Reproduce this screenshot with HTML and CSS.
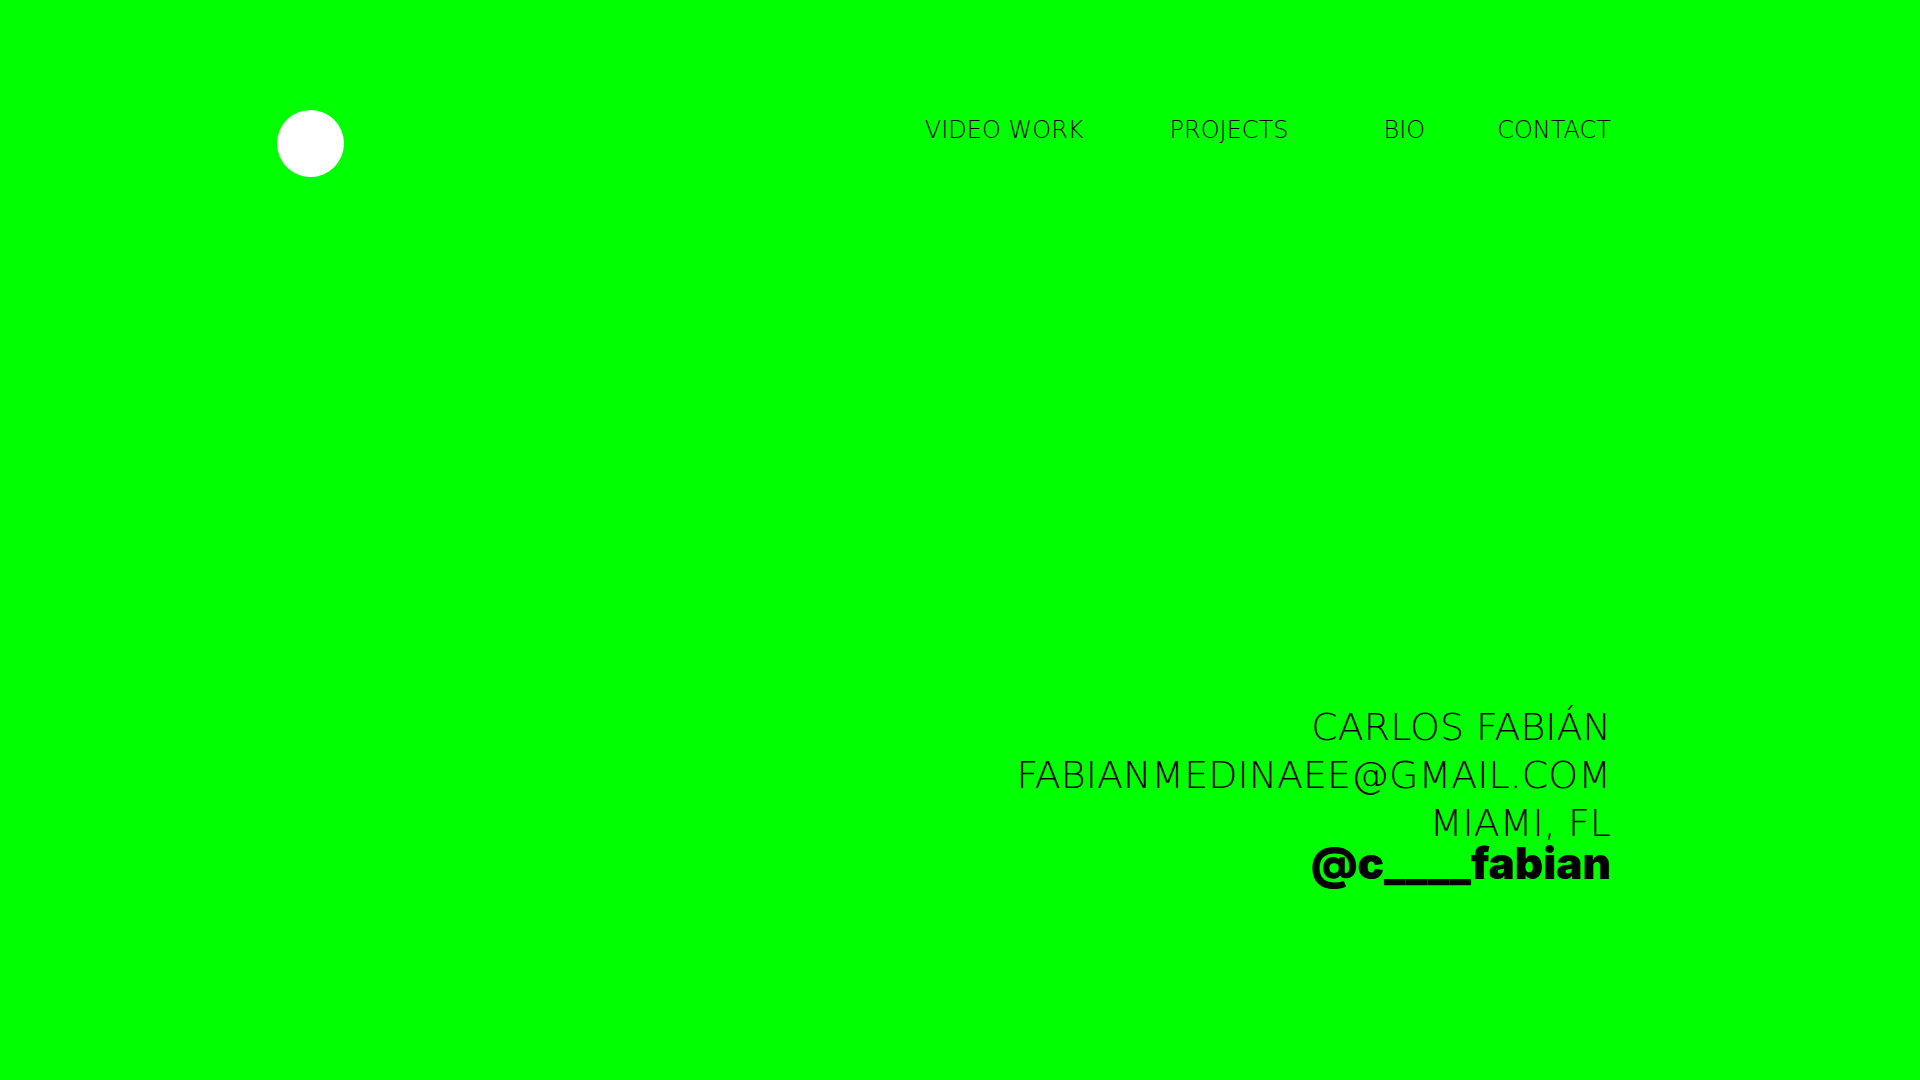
FILE: index.html
```
<!DOCTYPE html>
<html lang="en">
<head>
<meta charset="utf-8">
<meta name="viewport" content="width=device-width, initial-scale=1">
<title>Carlos Fabián</title>
<link rel="stylesheet" href="styles.css">
</head>
<body>
<header class="site-header">
  <a class="logo" href="#" aria-label="Home"></a>
  <nav class="nav">
    <a class="nav-link nav-video" href="#">VIDEO WORK</a>
    <a class="nav-link nav-projects" href="#">PROJECTS</a>
    <a class="nav-link nav-bio" href="#">BIO</a>
    <a class="nav-link" href="#">CONTACT</a>
  </nav>
</header>
<main class="contact">
  <p class="line">CARLOS FABIÁN</p>
  <a class="line" href="mailto:FABIANMEDINAEE@GMAIL.COM">FABIANMEDINAEE@GMAIL.COM</a>
  <p class="line">MIAMI, FL</p>
  <a class="handle" href="#">@c____fabian</a>
</main>
</body>
</html>
```
FILE: styles.css
```
* { box-sizing: border-box; }
body {
  margin: 0;
  min-height: 100vh;
  padding: 110px 309px 201px 277px;
  display: flex;
  flex-direction: column;
  justify-content: space-between;
  background: #00ff00;
  color: #000;
  font-family: "DejaVu Sans Light", "DejaVu Sans", sans-serif;
}
a { color: inherit; text-decoration: none; }
.site-header { display: flex; justify-content: space-between; align-items: flex-start; }
.logo { width: 67px; height: 67px; border-radius: 50%; background: #fff; }
.nav { display: flex; }
.nav-link { font-size: 24px; line-height: 40px; font-weight: 200; }
.nav-video { margin-right: 86px; }
.nav-projects { margin-right: 95px; }
.nav-bio { margin-right: 72px; }
.contact { display: flex; flex-direction: column; align-items: flex-end; text-align: right; }
.line { margin: 0; font-size: 38px; line-height: 48px; font-weight: 200; }
.handle { font-family: Inter, sans-serif; font-size: 44px; line-height: 32px; font-weight: 900; }
```
